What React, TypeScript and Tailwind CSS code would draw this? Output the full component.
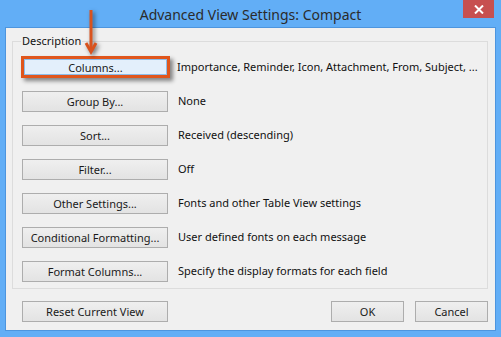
import React from "react";

const font = { fontFamily: '"Noto Sans", "Segoe UI", Arial, sans-serif' };

function Btn({ label, w = "w-[146px]", highlight = false }: { label: string; w?: string; highlight?: boolean }) {
  if (highlight) {
    return (
      <div className={`${w} h-[22px] shrink-0 border-[3px] border-[#e0561c] shadow-[3px_3px_4px_rgba(0,0,0,0.45)] flex`}>
        <div className="flex-1 border border-[#8cbdea] bg-[#e3effb] flex items-center justify-center text-[11px] text-[#1a1a1a] leading-none">
          {label}
        </div>
      </div>
    );
  }
  return (
    <div
      className={`${w} h-[21px] shrink-0 border border-[#adadad] bg-gradient-to-b from-[#efefef] to-[#e3e3e3] flex items-center justify-center text-[11px] text-[#1a1a1a] leading-none`}
    >
      {label}
    </div>
  );
}

const rows: [string, string][] = [
  ["Columns...", "Importance, Reminder, Icon, Attachment, From, Subject, ..."],
  ["Group By...", "None"],
  ["Sort...", "Received (descending)"],
  ["Filter...", "Off"],
  ["Other Settings...", "Fonts and other Table View settings"],
  ["Conditional Formatting...", "User defined fonts on each message"],
  ["Format Columns...", "Specify the display formats for each field"],
];

export default function App() {
  return (
    <div className="w-[501px] h-[337px] bg-[#62aef6] relative flex flex-col overflow-hidden" style={font}>
      <div className="h-[27px] shrink-0 flex items-center justify-center text-[14px] text-[#2b2b2b] pt-[1px]">
        Advanced View Settings: Compact
      </div>
      <div className="absolute top-0 left-[463px] w-[31px] h-[18px] bg-[#c75050] flex items-center justify-center">
        <svg width="10" height="9" viewBox="0 0 10 9">
          <path d="M1 0.5 L9 8.5 M9 0.5 L1 8.5" stroke="#fff" strokeWidth="2" />
        </svg>
      </div>
      <div className="mx-[5px] h-[304px] shrink-0 bg-[#f0f0f0] border border-[#4d95de] pl-[6px] pr-[5px] pt-[13px]">
        <div className="relative w-[476px] h-[248px] border border-[#dcdcdc] pl-[9px] pt-[14px] flex flex-col gap-[13px]">
          <div className="absolute left-[8px] top-[-9px] bg-[#f0f0f0] px-[1px] text-[11px] leading-[16px] text-[#111]">
            Description
          </div>
          {rows.map(([b, d], i) => (
            <div key={b} className={`flex items-center gap-[10px] ${i === 0 ? "ml-[-1px]" : ""}`}>
              {i === 0 ? <Btn label={b} w="w-[149px]" highlight /> : <Btn label={b} />}
              <div className={`text-[11px] text-[#111] whitespace-nowrap ${i === 0 ? "ml-[-3px]" : ""}`}>{d}</div>
            </div>
          ))}
        </div>
        <div className="flex items-center mt-[12px] pl-[10px] pr-[2px]">
          <Btn label="Reset Current View" />
          <div className="flex-1" />
          <Btn label="OK" w="w-[73px]" />
          <div className="w-[11px]" />
          <Btn label="Cancel" w="w-[73px]" />
        </div>
      </div>
      <svg
        className="absolute left-[80px] top-[6px]"
        width="26"
        height="56"
        viewBox="0 0 26 56"
        style={{ filter: "drop-shadow(2px 2px 2px rgba(0,0,0,0.5))" }}
      >
        <path d="M11 4 L11 44" stroke="#d9531e" strokeWidth="3" />
        <path d="M6 37 L11 46 L16 37" stroke="#d9531e" strokeWidth="3" fill="none" strokeLinejoin="miter" />
      </svg>
    </div>
  );
}
